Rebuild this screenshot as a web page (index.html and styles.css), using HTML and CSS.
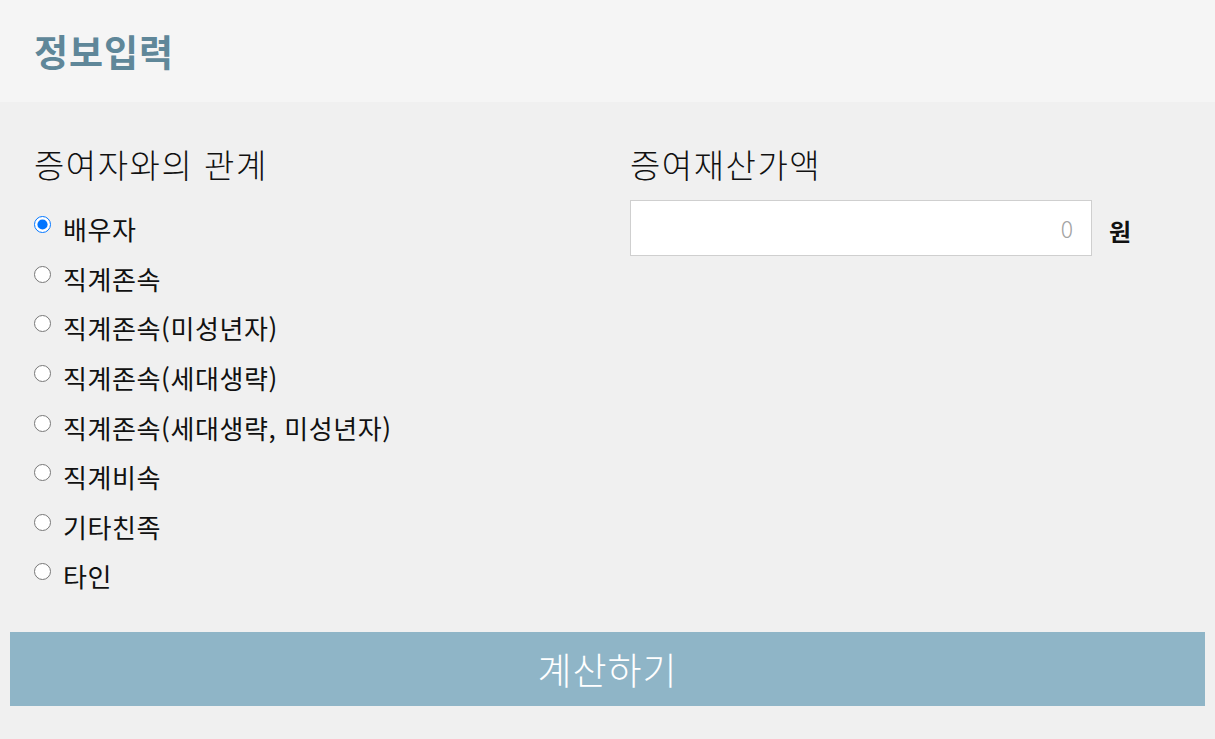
FILE: index.html
```html
<!DOCTYPE html>
<html lang="ko">
<head>
  <meta charset="UTF-8" />
  <meta name="viewport" content="width=device-width, initial-scale=1.0" />
  <title>증여세 계산</title>
  <link rel="stylesheet" href="styles.css">
</head>
<body>
  <header class="page-head">
    <h1>정보입력</h1>
  </header>

  <div class="form">
    <section class="col">
      <h2 class="rel-title">증여자와의 관계</h2>
      <label class="opt"><input type="radio" name="rel" checked> 배우자</label>
      <label class="opt"><input type="radio" name="rel"> 직계존속</label>
      <label class="opt"><input type="radio" name="rel"> 직계존속(미성년자)</label>
      <label class="opt"><input type="radio" name="rel"> 직계존속(세대생략)</label>
      <label class="opt"><input type="radio" name="rel"> 직계존속(세대생략, 미성년자)</label>
      <label class="opt"><input type="radio" name="rel"> 직계비속</label>
      <label class="opt"><input type="radio" name="rel"> 기타친족</label>
      <label class="opt"><input type="radio" name="rel"> 타인</label>
    </section>
    <section class="col">
      <h2>증여재산가액</h2>
      <div class="amount">
        <input type="text" placeholder="0">
        <span class="unit">원</span>
      </div>
    </section>
  </div>

  <button class="calc">계산하기</button>
</body>
</html>
```

FILE: styles.css
```css
body {
  margin: 0;
  background: #f0f0f0;
  font-family: "Noto Sans CJK KR", "Noto Sans", sans-serif;
  color: #111;
}
.page-head {
  background: #f5f5f5;
  height: 102px;
  padding: 0 34px;
  display: flex;
  align-items: center;
}
.page-head h1 {
  margin: 0;
  font-size: 37px;
  font-weight: 700;
  letter-spacing: 1px;
  color: #5f8799;
}
.form {
  display: flex;
  padding: 36px 34px 0;
}
.col {
  width: 596px;
  flex-shrink: 0;
  display: flex;
  flex-direction: column;
}
.col h2 {
  margin: 0 0 10px;
  font-size: 33px;
  font-weight: 300;
  letter-spacing: 1.5px;
  line-height: 52px;
}
.col .rel-title {
  margin-bottom: 14px;
}
.opt {
  display: flex;
  align-items: center;
  height: 49.6px;
  font-size: 26px;
  font-weight: 400;
  letter-spacing: 0.6px;
}
.opt input {
  margin: 0 12px 8px 0;
  width: 17px;
  height: 17px;
}
.amount {
  display: flex;
  align-items: center;
}
.amount input {
  width: 462px;
  height: 56px;
  box-sizing: border-box;
  border: 1px solid #cfcfcf;
  background: #fff;
  text-align: right;
  padding: 0 18px;
  font-family: inherit;
  font-size: 23px;
  font-weight: 300;
}
.amount input::placeholder {
  color: #a3a3a3;
}
.unit {
  margin-left: 17px;
  font-size: 24px;
  font-weight: 700;
  padding-top: 4px;
}
.calc {
  display: block;
  width: calc(100% - 20px);
  margin: 31px 10px 0;
  height: 74px;
  border: 0;
  background: #8fb5c7;
  color: #fff;
  font-family: inherit;
  font-size: 37px;
  font-weight: 300;
  letter-spacing: 1px;
}
```
